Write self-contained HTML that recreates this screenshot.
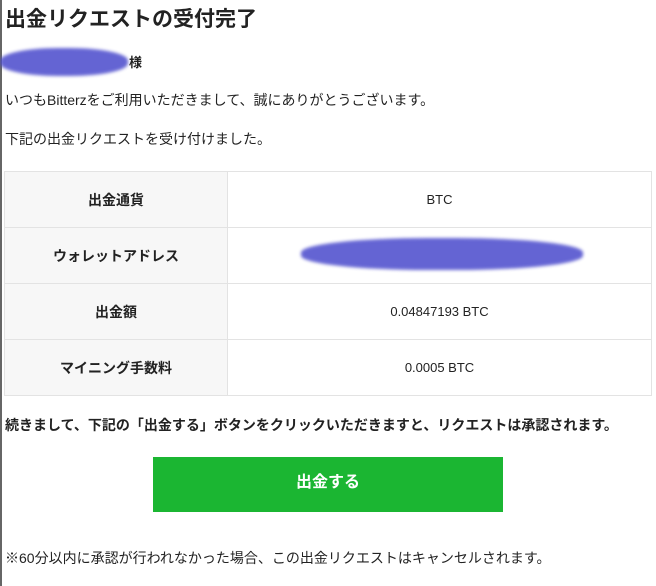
<!DOCTYPE html>
<html><head><meta charset="utf-8"><style>
body{margin:0;width:656px;height:586px;background:#fff;font-family:"Liberation Sans","Noto Sans CJK JP",sans-serif;color:#222;position:relative;overflow:hidden}
.lb{position:absolute;left:0;top:0;width:2px;height:586px;background:#666}
.t{position:absolute;white-space:nowrap}
table{position:absolute;left:4px;top:171px;width:648px;border-collapse:collapse}
td{border:1px solid #e3e3e3;height:55px;text-align:center;font-size:13px;padding:0}
td.h{background:#f7f7f7;font-weight:bold;width:222px;font-size:14px}
.btn{position:absolute;left:153px;top:457px;width:350px;height:55px;background:#1bb632;color:#fff;font-weight:bold;font-size:16px;text-align:center;line-height:52px}
.sc{position:absolute;background:#4a4acc;border-radius:45%;filter:blur(1.5px);opacity:.85}
</style></head><body>
<div class="lb"></div>
<div class="t" style="left:5px;top:3px;font-size:21px;font-weight:bold">出金リクエストの受付完了</div>
<div class="sc" style="left:0;top:48px;width:128px;height:28px"></div>
<div class="t" style="left:129px;top:52px;font-size:13px;font-weight:bold">様</div>
<div class="t" style="left:5px;top:90px;font-size:14px">いつもBitterzをご利用いただきまして、誠にありがとうございます。</div>
<div class="t" style="left:5px;top:129px;font-size:14px">下記の出金リクエストを受け付けました。</div>
<table>
<tr><td class="h">出金通貨</td><td>BTC</td></tr>
<tr><td class="h">ウォレットアドレス</td><td></td></tr>
<tr><td class="h">出金額</td><td>0.04847193 BTC</td></tr>
<tr><td class="h">マイニング手数料</td><td>0.0005 BTC</td></tr>
</table>
<div class="sc" style="left:301px;top:238px;width:282px;height:32px"></div>
<div class="t" style="left:5px;top:415px;font-size:14px;font-weight:bold">続きまして、下記の「出金する」ボタンをクリックいただきますと、リクエストは承認されます。</div>
<div class="btn">出金する</div>
<div class="t" style="left:5px;top:548px;font-size:14px">※60分以内に承認が行われなかった場合、この出金リクエストはキャンセルされます。</div>
</body></html>
